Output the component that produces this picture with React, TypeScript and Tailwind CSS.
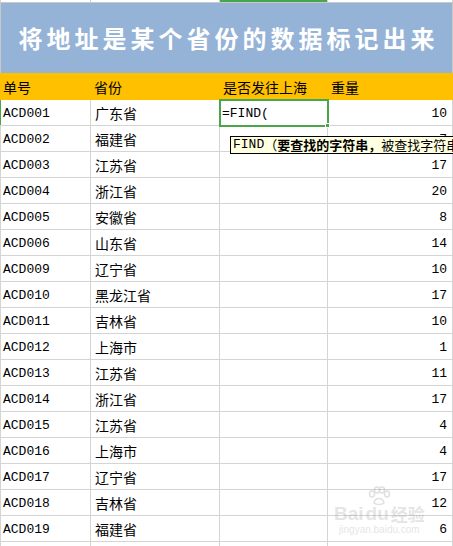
const rows: [string, string, string][] = [
  ["ACD001", "广东省", "10"],
  ["ACD002", "福建省", "7"],
  ["ACD003", "江苏省", "17"],
  ["ACD004", "浙江省", "20"],
  ["ACD005", "安徽省", "8"],
  ["ACD006", "山东省", "14"],
  ["ACD009", "辽宁省", "10"],
  ["ACD010", "黑龙江省", "17"],
  ["ACD011", "吉林省", "10"],
  ["ACD012", "上海市", "1"],
  ["ACD013", "江苏省", "11"],
  ["ACD014", "浙江省", "17"],
  ["ACD015", "江苏省", "4"],
  ["ACD016", "上海市", "4"],
  ["ACD017", "辽宁省", "17"],
  ["ACD018", "吉林省", "12"],
  ["ACD019", "福建省", "6"],
];

const mono = "font-['Liberation_Mono','Noto_Sans_CJK_SC',monospace]";
const cjk = "font-['Noto_Sans_CJK_SC','Liberation_Sans',sans-serif]";
const cols = "grid grid-cols-[91px_129px_108px_125px]";

function Row({ code, prov, weight, first }: { code: string; prov: string; weight: string; first?: boolean }) {
  return (
    <div className={`${cols} h-[26px] border-b border-[#d4d4d4]`}>
      <div
        className={`flex items-center pl-[2px] pt-[3px] border-l border-r border-[#d4d4d4] ${mono} text-[13px] text-black ${
          first ? "border-l-[#4aa64a]" : ""
        }`}
      >
        {code}
      </div>
      <div className={`flex items-center pl-[4px] pt-[2px] border-r border-[#d4d4d4] ${cjk} text-[14px] text-black`}>
        {prov}
      </div>
      <div className="relative border-r border-[#d4d4d4]">
        {first && (
          <div className="absolute -left-[1px] -top-[1px] w-[110px] h-[28px] border-2 border-[#4aa64a] z-10 flex items-center pl-[1px] pt-[2px]">
            <span className={`${mono} text-[13px] text-black`}>=FIND(</span>
            <span className="absolute -right-[3px] -bottom-[3px] w-[5px] h-[5px] bg-[#4aa64a] border border-white" />
          </div>
        )}
      </div>
      <div className={`flex items-center justify-end pr-[5px] pt-[3px] border-r border-[#d4d4d4] ${mono} text-[13px] text-black`}>
        {weight}
      </div>
    </div>
  );
}

export default function App() {
  return (
    <div className="relative w-[453px] h-[546px] overflow-hidden bg-white">
      {/* strip of the row above */}
      <div className={`${cols} h-[3px] border-b border-[#c8c8c8]`}>
        <div className="border-l border-r border-[#d4d4d4]" />
        <div className="border-r border-[#d4d4d4]" />
        <div className="border-r border-[#d4d4d4]">
          <div className="h-[2px] bg-[#4aa64a]" />
        </div>
        <div className="border-r border-[#d4d4d4]" />
      </div>

      {/* title banner */}
      <div className="h-[70px] bg-[#95b3d7] border-l border-r border-[#c8c8c8] flex items-center justify-center">
        <span className={`${cjk} font-bold text-white text-[24px] tracking-[4px] pl-[4px] whitespace-nowrap`}>
          将地址是某个省份的数据标记出来
        </span>
      </div>

      {/* header */}
      <div className={`${cols} h-[27px] bg-[#ffc000] ${cjk} text-[14px] text-black`}>
        <div className="flex items-center pl-[3px] pt-[2px]">单号</div>
        <div className="flex items-center pl-[3px] pt-[2px]">省份</div>
        <div className="flex items-center pl-[3px] pt-[2px]">是否发往上海</div>
        <div className="flex items-center pl-[3px] pt-[2px]">重量</div>
      </div>

      {rows.map(([c, p, w], i) => (
        <Row key={c} code={c} prov={p} weight={w} first={i === 0} />
      ))}
      <div className={`${cols} h-[26px]`}>
        <div className="border-l border-r border-[#d4d4d4]" />
        <div className="border-r border-[#d4d4d4]" />
        <div className="border-r border-[#d4d4d4]" />
        <div className="border-r border-[#d4d4d4]" />
      </div>

      {/* function tooltip */}
      <div className="absolute left-[230px] top-[136px] h-[18px] w-[260px] bg-[#ffffe1] border border-black z-20 flex items-center pl-[2px] whitespace-nowrap text-[13px] text-black">
        <span className={mono}>FIND</span>
        <span className={cjk}>（</span>
        <span className={`${cjk} font-bold`}>要查找的字符串，</span>
        <span className={cjk}>被查找字符串，[开始位置]）</span>
      </div>

      {/* watermark */}
      <div className="absolute left-[334px] top-[486px] flex flex-col items-center opacity-25 pointer-events-none">
        <svg width="24" height="20" viewBox="0 0 24 20" className="mb-[-2px]">
          <g fill="none" stroke="#888" strokeWidth="1.5">
            <ellipse cx="5" cy="8" rx="2.5" ry="3" />
            <ellipse cx="10" cy="4" rx="2.5" ry="3" />
            <ellipse cx="15" cy="4" rx="2.5" ry="3" />
            <ellipse cx="20" cy="8" rx="2.5" ry="3" />
            <path d="M7 17 C8 11 16 11 17 17 C15 19 9 19 7 17 Z" />
          </g>
        </svg>
        <div className="flex items-end gap-[2px]">
          <span className="font-['Liberation_Sans',sans-serif] font-bold text-[19px] leading-[20px] text-[#999]">Bai</span>
          <span className="font-['Liberation_Sans',sans-serif] font-bold text-[19px] leading-[20px] text-[#999]">du</span>
          <span className={`${cjk} font-bold text-[17px] leading-[20px] text-[#999]`}>经验</span>
        </div>
        <span className="font-['Liberation_Sans',sans-serif] text-[10px] leading-[12px] text-[#999]">jingyan.baidu.com</span>
      </div>
    </div>
  );
}
